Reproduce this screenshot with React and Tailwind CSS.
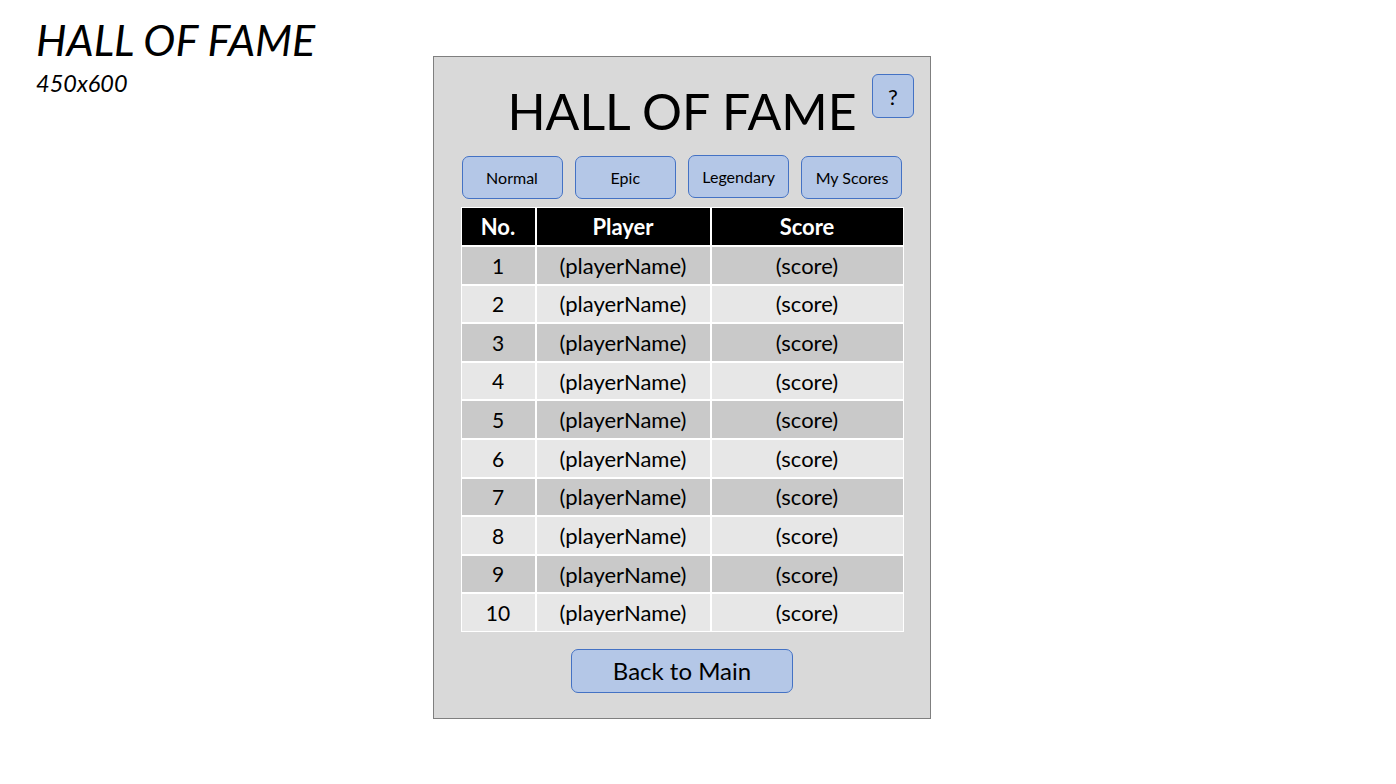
import React from 'react';

const tabs = ['Normal', 'Epic', 'Legendary', 'My Scores'];
const rows = [1, 2, 3, 4, 5, 6, 7, 8, 9, 10];

const font = { fontFamily: 'Lato, "Open Sans", sans-serif' };

function TabButton({ label, raised }) {
  return (
    <button
      type="button"
      className={`flex h-[43px] w-[101px] items-center justify-center rounded-[7px] border border-[#4472c4] bg-[#b4c7e7] text-[16px] text-black ${raised ? '-mt-px' : ''}`}
    >
      {label}
    </button>
  );
}

export default function App() {
  return (
    <div className="flex h-[784px] w-[1396px] bg-white text-black" style={font}>
      <div className="w-[433px] shrink-0 pl-[36px] pt-[15px]">
        <div className="text-[43px] italic leading-[50px]">HALL OF FAME</div>
        <div className="mt-[5px] text-[23.5px] italic leading-[26px]">450x600</div>
      </div>

      <div className="relative mt-[56px] flex h-[663px] w-[498px] flex-col items-center border border-[#7f7f7f] bg-[#d9d9d9]">
        <button
          type="button"
          className="absolute right-[16px] top-[17px] flex h-[44px] w-[42px] items-center justify-center rounded-[6px] border border-[#4472c4] bg-[#b4c7e7] text-[22px]"
        >
          ?
        </button>

        <h1 className="mt-[24px] text-[50px] leading-[61px]">HALL OF FAME</h1>

        <div className="mt-[14px] flex w-[441px] items-start justify-between">
          {tabs.map((t) => (
            <TabButton key={t} label={t} raised={t === 'Legendary'} />
          ))}
        </div>

        <div className="mt-[8px] w-[443px] bg-white p-px">
          <div className="grid grid-cols-[73px_173px_191px] gap-[2px]">
            <div className="flex h-[37px] items-center justify-center bg-black text-[22px] font-bold text-white">No.</div>
            <div className="flex h-[37px] items-center justify-center bg-black text-[22px] font-bold text-white">Player</div>
            <div className="flex h-[37px] items-center justify-center bg-black text-[22px] font-bold text-white">Score</div>
            {rows.map((n) => {
              const bg = n % 2 === 1 ? 'bg-[#c9c9c9]' : 'bg-[#e7e7e7]';
              return (
                <React.Fragment key={n}>
                  <div className={`flex h-[36.6px] items-center justify-center text-[21px] ${bg}`}>{n}</div>
                  <div className={`flex h-[36.6px] items-center justify-center text-[22px] ${bg}`}>(playerName)</div>
                  <div className={`flex h-[36.6px] items-center justify-center text-[22px] ${bg}`}>(score)</div>
                </React.Fragment>
              );
            })}
          </div>
        </div>

        <button
          type="button"
          className="mt-[17px] flex h-[44px] w-[222px] items-center justify-center rounded-[7px] border border-[#4472c4] bg-[#b4c7e7] text-[24px]"
        >
          Back to Main
        </button>
      </div>
    </div>
  );
}
